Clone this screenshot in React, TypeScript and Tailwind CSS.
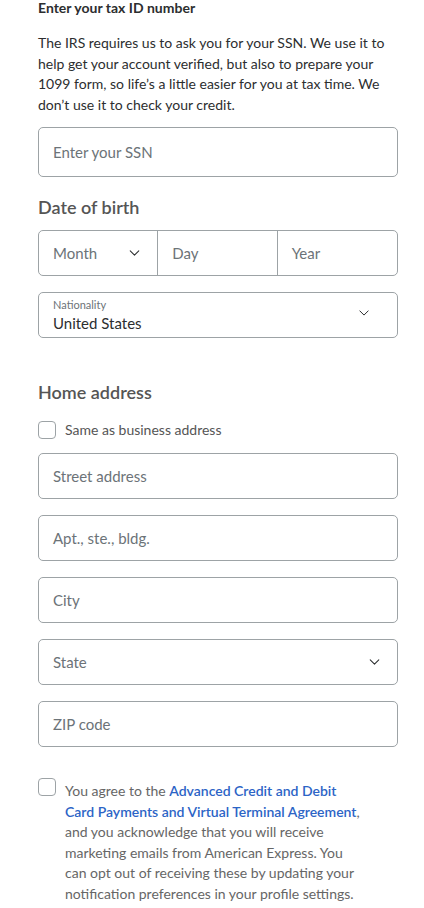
import React from 'react';

function Chevron({ className }: { className?: string }) {
  return (
    <svg viewBox="0 0 12 7" className={className} fill="none" stroke="#2c2e2f" strokeWidth="1.2" strokeLinecap="round" strokeLinejoin="round">
      <path d="M1 1l5 5 5-5" />
    </svg>
  );
}

function TextField({ placeholder, tall }: { placeholder: string; tall?: boolean }) {
  return (
    <div className={`flex items-center rounded-[5px] border border-[#9da3a6] px-[14px] ${tall ? 'h-[50px]' : 'h-[46px]'}`}>
      <span className="text-[15px] text-[#6c7378]">{placeholder}</span>
    </div>
  );
}

function Checkbox() {
  return <div className="h-[18px] w-[18px] shrink-0 rounded-[4px] border border-[#9da3a6] bg-white" />;
}

export default function App() {
  return (
    <div className="min-h-screen bg-white font-['Lato',sans-serif] text-[#2c2e2f]">
      <div className="ml-[38px] w-[360px]">
        <h1 className="text-[14px] font-bold leading-[16px] text-[#2c2e2f]">Enter your tax ID number</h1>
        <p className="mt-[17px] text-[14px] leading-[20.5px] text-[#2c2e2f]">
          The IRS requires us to ask you for your SSN. We use it to help get your account verified, but also to prepare your 1099 form, so life’s a little easier for you at tax time. We don’t use it to check your credit.
        </p>

        <div className="mt-[12px]">
          <TextField placeholder="Enter your SSN" tall />
        </div>

        <h2 className="mt-[18px] text-[18px] font-semibold leading-[24px] text-[#555]">Date of birth</h2>
        <div className="mt-[11px] grid h-[46px] grid-cols-3 rounded-[5px] border border-[#9da3a6]">
          <div className="flex items-center justify-between border-r border-[#9da3a6] pl-[14px] pr-[17px]">
            <span className="text-[15px] text-[#6c7378]">Month</span>
            <Chevron className="h-[6px] w-[11px]" />
          </div>
          <div className="flex items-center border-r border-[#9da3a6] px-[14px]">
            <span className="text-[15px] text-[#6c7378]">Day</span>
          </div>
          <div className="flex items-center px-[14px]">
            <span className="text-[15px] text-[#6c7378]">Year</span>
          </div>
        </div>

        <div className="mt-[16px] flex h-[46px] items-center justify-between rounded-[5px] border border-[#9da3a6] pl-[14px] pr-[28px]">
          <div className="flex flex-col">
            <span className="text-[11px] leading-[13px] text-[#6c7378]">Nationality</span>
            <span className="mt-[3px] text-[15px] leading-[18px] text-[#2c2e2f]">United States</span>
          </div>
          <Chevron className="-mt-[4px] h-[6px] w-[10px]" />
        </div>

        <h2 className="mt-[42px] text-[18px] font-semibold leading-[24px] text-[#555]">Home address</h2>
        <label className="mt-[15px] flex items-center gap-[9px]">
          <Checkbox />
          <span className="text-[14px] text-[#555]">Same as business address</span>
        </label>

        <div className="mt-[13px] flex flex-col gap-[16px]">
          <TextField placeholder="Street address" />
          <TextField placeholder="Apt., ste., bldg." />
          <TextField placeholder="City" />
          <div className="flex h-[46px] items-center justify-between rounded-[5px] border border-[#9da3a6] pl-[14px] pr-[17px]">
            <span className="text-[15px] text-[#6c7378]">State</span>
            <Chevron className="h-[6px] w-[11px]" />
          </div>
          <TextField placeholder="ZIP code" />
        </div>

        <label className="mt-[31px] flex items-start gap-[9px] pr-[33px]">
          <Checkbox />
          <span className="mt-[3px] text-[14px] leading-[20.6px] text-[#666]">
            You agree to the <a className="font-semibold text-[#2c64c6]">Advanced Credit and Debit</a>{' '}
            <a className="font-semibold text-[#2c64c6]">Card Payments and Virtual Terminal Agreement</a>, and you acknowledge that you will receive marketing emails from American Express. You can opt out of receiving these by updating your notification preferences in your profile settings.
          </span>
        </label>
      </div>
    </div>
  );
}
